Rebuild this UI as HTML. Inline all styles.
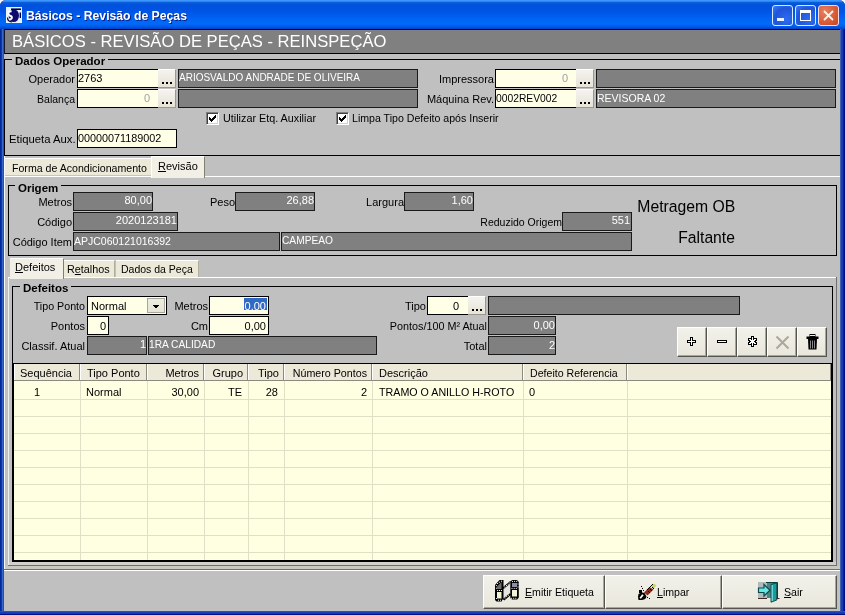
<!DOCTYPE html>
<html><head><meta charset="utf-8">
<style>
*{margin:0;padding:0;box-sizing:border-box}
html,body{width:845px;height:615px;overflow:hidden;background:#C0C0C0}
body{position:relative;will-change:transform;font-family:"Liberation Sans",sans-serif;font-size:11px;color:#000}
.a{position:absolute;white-space:nowrap}
.t{position:absolute;white-space:nowrap;line-height:12px}
.r{text-align:right}
.in{position:absolute;background:#FFFFE8;border:1px solid #000;white-space:nowrap;overflow:hidden;line-height:17px;padding:0 1px}
.ro{position:absolute;background:#808080;border:1px solid #1a1a1a;color:#fff;white-space:nowrap;overflow:hidden;line-height:16px;padding:0 0px}
.dots{position:absolute;width:18px;height:19px;background:linear-gradient(#F4F3EE,#E6E3D6);border-right:1px solid #9a988c;border-bottom:1px solid #9a988c;border-top:1px solid #fff;}
.dots i{position:absolute;left:4px;top:12px;width:2px;height:2px;background:#000;box-shadow:4px 0 #000,8px 0 #000}
.gb{position:absolute;border:1px solid #000;}
.gbl{position:absolute;font-weight:bold;font-size:11.5px;line-height:12px;background:#C0C0C0;padding:0 3px}
.cb{position:absolute;width:13px;height:13px;background:#fff;border-style:solid;border-width:1px;border-color:#808080 #fff #fff #808080;box-shadow:inset 1px 1px #404040, inset -1px -1px #D4D0C8}
.hdr{position:absolute;top:364px;height:17px;line-height:16px;background:#ECE9D8;border-right:1px solid #ACA899;box-shadow:inset -1px 0 #fff}
.btn{position:absolute;background:linear-gradient(#F2F1EA,#E9E7DB);border-top:1px solid #fff;border-left:1px solid #fff;border-right:1px solid #555550;border-bottom:1px solid #555550;box-shadow:inset -1px -1px #A8A698}
.hc{position:absolute;top:364px;height:17px;background:#ECE9D8;border-right:1px solid #8C8A7E;border-bottom:1px solid #8C8A7E;box-shadow:inset 1px 0 #fff}
.gl{background:#E0E0C6}
</style></head><body>
<!-- window frame -->
<div class="a" style="left:0;top:0;width:845px;height:615px;background:#F0F4FF"></div>
<div class="a" style="left:0;top:0;width:845px;height:615px;background:#0838B0;border-radius:6px 6px 0 0"></div>
<div class="a" style="left:0;top:0;width:845px;height:29px;border-radius:6px 6px 0 0;background:linear-gradient(to bottom,#3D95FF 0px,#3D95FF 1px,#0A5ED8 2.5px,#0050DC 5px,#0055E6 12px,#0064F4 19px,#006AF8 24px,#005AEA 26.5px,#0040C8 29px)"></div>
<div class="a" style="left:0;top:29px;width:4px;height:586px;background:linear-gradient(to right,#002A9A 0,#002A9A 1px,#083AA8 1px,#083AA8 2px,#3A64C8 2px,#3A64C8 3px,#2850B0 3px)"></div>
<div class="a" style="left:840px;top:29px;width:5px;height:586px;background:linear-gradient(to right,#4060B0 0,#4060B0 1px,#2040B8 1px,#1838B0 3px,#0820A0 3px,#0820A0 4px,#000E88 4px)"></div>
<div class="a" style="left:0;top:611px;width:845px;height:4px;background:linear-gradient(#3050B8 0,#3050B8 1px,#1840B8 1px,#1038B0 3px,#001088 3px)"></div>
<div class="a" style="left:4px;top:29px;width:836px;height:1px;background:#000050"></div>
<div class="a" style="left:4px;top:30px;width:836px;height:581px;background:#C0C0C0"></div>
<!-- icon -->
<svg class="a" style="left:6px;top:7px" width="16" height="16" viewBox="0 0 16 16">
<rect x="0" y="0" width="16" height="16" fill="#E6F2FF"/>
<ellipse cx="7.8" cy="8.6" rx="5.2" ry="6.4" fill="#0A0A70"/>
<path d="M5 2.2 L15 2.2" stroke="#000040" stroke-width="1.6"/>
<path d="M14.3 5.5 L14.3 11" stroke="#000040" stroke-width="1.4"/>
<path d="M5.6 4.2 Q2.2 4.2 2.4 6.6 Q2.6 8.4 4.6 9 Q6.4 9.6 5.6 11.6 Q4.8 13 2.2 12.4" stroke="#fff" stroke-width="2" fill="none"/>
<path d="M1.5 10.5 Q1.5 14.5 6 15" stroke="#000030" stroke-width="1.2" fill="none"/>
</svg>
<!-- title -->
<div class="a" style="left:26px;top:8px;font-weight:bold;font-size:13.5px;line-height:16px;color:#fff;text-shadow:1px 1px #0A1E8C;transform:scaleX(0.905);transform-origin:0 0">Básicos - Revisão de Peças</div>
<!-- title buttons -->
<div class="a" style="left:772px;top:5px;width:21px;height:21px;border:1px solid #D8ECFF;border-radius:3px;background:radial-gradient(circle at 70% 70%,#2E6BF0,#1F55D8 60%,#3A7BFF)"><div class="a" style="left:4px;top:12px;width:7px;height:3px;background:#E8F4FF"></div></div>
<div class="a" style="left:795px;top:5px;width:21px;height:21px;border:1px solid #D8ECFF;border-radius:3px;background:radial-gradient(circle at 70% 70%,#2E6BF0,#1F55D8 60%,#3A7BFF)"><div class="a" style="left:4px;top:4px;width:11px;height:11px;border:1px solid #fff;border-top-width:3px"></div></div>
<div class="a" style="left:818px;top:5px;width:21px;height:21px;border:1px solid #F4DCE8;border-radius:3px;background:radial-gradient(circle at 30% 30%,#E88060,#D85A34 60%,#C04820)">
<svg class="a" style="left:0;top:0" width="19" height="19"><path d="M5 5 L14 14 M14 5 L5 14" stroke="#FFF0E6" stroke-width="1.8"/></svg></div>

<!-- header -->
<div class="a" style="left:5px;top:30px;width:835px;height:23px;background:#808080"></div>
<div class="a" style="left:4px;top:53px;width:836px;height:1px;background:#000"></div>
<div class="a" style="left:4px;top:29px;width:1px;height:25px;background:#101830"></div>

<div class="a" style="left:12px;top:32px;font-size:16.6px;line-height:20px;color:#fff">BÁSICOS - REVISÃO DE PEÇAS - REINSPEÇÃO</div>

<!-- Dados Operador -->
<div class="gb" style="left:4px;top:59px;width:836px;height:97px;border-width:1px 0 1px 1px"></div>
<div class="gbl" style="left:12px;top:55px">Dados Operador</div>

<div class="t r" style="left:0;width:75px;top:73px">Operador</div>
<div class="in" style="left:77px;top:69px;width:82px;height:19px;padding-left:0">2763</div>
<div class="dots" style="left:158px;top:69px"><i></i></div>
<div class="ro" style="left:178px;top:69px;width:240px;height:19px;font-size:10px">ARIOSVALDO ANDRADE DE OLIVEIRA</div>

<div class="t r" style="left:0;width:75px;top:93px;font-size:10.5px">Balança</div>
<div class="in r" style="left:77px;top:89px;width:82px;height:19px;color:#A0A0A0;padding-right:8px">0</div>
<div class="dots" style="left:158px;top:89px"><i></i></div>
<div class="ro" style="left:178px;top:89px;width:240px;height:19px"></div>

<div class="t r" style="left:400px;width:94px;top:73px">Impressora</div>
<div class="in r" style="left:495px;top:69px;width:82px;height:19px;color:#A0A0A0;padding-right:8px">0</div>
<div class="dots" style="left:576px;top:69px"><i></i></div>
<div class="ro" style="left:596px;top:69px;width:240px;height:19px"></div>

<div class="t r" style="left:400px;width:94px;top:93px">Máquina Rev.</div>
<div class="in" style="left:495px;top:89px;width:82px;height:19px;font-size:10.3px;padding-left:0">0002REV002</div>
<div class="dots" style="left:576px;top:89px"><i></i></div>
<div class="ro" style="left:596px;top:89px;width:240px;height:19px;font-size:10.5px">REVISORA 02</div>

<div class="cb" style="left:206px;top:112px"><svg class="a" style="left:2px;top:2px" width="7" height="7" shape-rendering="crispEdges"><rect x="6" y="0" width="1" height="1"/><rect x="5" y="1" width="1" height="1"/><rect x="6" y="1" width="1" height="1"/><rect x="0" y="2" width="1" height="1"/><rect x="4" y="2" width="1" height="1"/><rect x="5" y="2" width="1" height="1"/><rect x="6" y="2" width="1" height="1"/><rect x="0" y="3" width="1" height="1"/><rect x="1" y="3" width="1" height="1"/><rect x="3" y="3" width="1" height="1"/><rect x="4" y="3" width="1" height="1"/><rect x="5" y="3" width="1" height="1"/><rect x="0" y="4" width="1" height="1"/><rect x="1" y="4" width="1" height="1"/><rect x="2" y="4" width="1" height="1"/><rect x="3" y="4" width="1" height="1"/><rect x="4" y="4" width="1" height="1"/><rect x="1" y="5" width="1" height="1"/><rect x="2" y="5" width="1" height="1"/><rect x="3" y="5" width="1" height="1"/><rect x="2" y="6" width="1" height="1"/></svg></div>
<div class="t" style="left:223px;top:112px;font-size:10.8px">Utilizar Etq. Auxiliar</div>
<div class="cb" style="left:336px;top:112px"><svg class="a" style="left:2px;top:2px" width="7" height="7" shape-rendering="crispEdges"><rect x="6" y="0" width="1" height="1"/><rect x="5" y="1" width="1" height="1"/><rect x="6" y="1" width="1" height="1"/><rect x="0" y="2" width="1" height="1"/><rect x="4" y="2" width="1" height="1"/><rect x="5" y="2" width="1" height="1"/><rect x="6" y="2" width="1" height="1"/><rect x="0" y="3" width="1" height="1"/><rect x="1" y="3" width="1" height="1"/><rect x="3" y="3" width="1" height="1"/><rect x="4" y="3" width="1" height="1"/><rect x="5" y="3" width="1" height="1"/><rect x="0" y="4" width="1" height="1"/><rect x="1" y="4" width="1" height="1"/><rect x="2" y="4" width="1" height="1"/><rect x="3" y="4" width="1" height="1"/><rect x="4" y="4" width="1" height="1"/><rect x="1" y="5" width="1" height="1"/><rect x="2" y="5" width="1" height="1"/><rect x="3" y="5" width="1" height="1"/><rect x="2" y="6" width="1" height="1"/></svg></div>
<div class="t" style="left:352px;top:112px;font-size:10.6px">Limpa Tipo Defeito após Inserir</div>

<div class="t" style="left:9px;top:133px;font-size:11.3px">Etiqueta Aux.</div>
<div class="in" style="left:77px;top:129px;width:100px;height:19px;font-size:10.8px;padding-left:0">00000071189002</div>

<!-- main tabs -->
<div class="a" style="left:4px;top:156px;width:1px;height:415px;background:#F4FAFF"></div>
<div class="a" style="left:5px;top:176px;width:835px;height:1px;background:#fff"></div>
<div class="a" style="left:4px;top:569px;width:836px;height:1px;background:#707068"></div>
<div class="a" style="left:4px;top:570px;width:836px;height:1px;background:#fff"></div>
<div class="a" style="left:5px;top:158px;width:146px;height:18px;background:#ECE9D8;border-top:1px solid #fff;border-bottom:1px solid #C8C6B8"></div>
<div class="t" style="left:12px;top:162px;font-size:10.6px">Forma de Acondicionamento</div>
<div class="a" style="left:151px;top:156px;width:54px;height:22px;background:#F1EFE6;border-top:1px solid #fff;border-left:1px solid #fff;border-right:1px solid #808070"></div>
<div class="t" style="left:158px;top:160px"><u>R</u>evisão</div>

<!-- tab page -->
<div class="a" style="left:8px;top:277px;width:1px;height:289px;background:#F0F0F0"></div>
<div class="a" style="left:9px;top:562px;width:827px;height:3px;background:#D0D0CC"></div>
<div class="a" style="left:5px;top:566px;width:835px;height:3px;background:#C9C9C2"></div>
<div class="a" style="left:8px;top:565px;width:829px;height:1px;background:#707068"></div>
<div class="a" style="left:836px;top:277px;width:1px;height:289px;background:#707070"></div>
<div class="gb" style="left:8px;top:185px;width:829px;height:71px"></div>
<div class="gbl" style="left:15px;top:182px">Origem</div>

<div class="t r" style="left:0;width:72px;top:196px">Metros</div>
<div class="ro r" style="left:73px;top:192px;width:80px;height:19px;padding-right:0;line-height:15px">80,00</div>
<div class="t r" style="left:150px;width:85px;top:196px">Peso</div>
<div class="ro r" style="left:235px;top:192px;width:80px;height:19px;padding-right:0;line-height:15px">26,88</div>
<div class="t r" style="left:320px;width:84px;top:196px">Largura</div>
<div class="ro r" style="left:404px;top:192px;width:70px;height:19px;padding-right:0;line-height:15px">1,60</div>
<div class="a" style="right:110px;top:196px;font-size:17.4px;line-height:20px;transform:scaleX(0.905);transform-origin:100% 0">Metragem OB</div>

<div class="t r" style="left:0;width:72px;top:216px">Código</div>
<div class="ro r" style="left:73px;top:212px;width:105px;height:19px;padding-right:0;line-height:15px">2020123181</div>
<div class="t r" style="left:400px;width:162px;top:216px;font-size:10.5px">Reduzido Origem</div>
<div class="ro r" style="left:562px;top:212px;width:70px;height:19px;padding-right:1px;line-height:15px">551</div>

<div class="t r" style="left:0;width:72px;top:236px">Código Item</div>
<div class="ro" style="left:73px;top:232px;width:207px;height:19px;font-size:10.5px">APJC060121016392</div>
<div class="ro" style="left:281px;top:232px;width:351px;height:19px;font-size:10.2px">CAMPEAO</div>
<div class="a" style="right:110px;top:227px;font-size:17.4px;line-height:20px;transform:scaleX(0.9);transform-origin:100% 0">Faltante</div>

<!-- sub tabs -->
<div class="a" style="left:8px;top:277px;width:828px;height:1px;background:#fff"></div>
<div class="a" style="left:64px;top:260px;width:51px;height:17px;background:#ECE9D8;border-top:1px solid #fff;border-right:1px solid #B0AE9F"></div>
<div class="t" style="left:67px;top:263px;font-size:10.8px"><span>R<u>e</u>talhos</span></div>
<div class="a" style="left:116px;top:260px;width:83px;height:17px;background:#ECE9D8;border-top:1px solid #fff;border-right:1px solid #B0AE9F"></div>
<div class="t" style="left:121px;top:263px;font-size:10.5px">Dados da Peça</div>
<div class="a" style="left:10px;top:258px;width:54px;height:21px;background:#F1EFE6;border-top:1px solid #fff;border-right:1px solid #808070"></div>
<div class="t" style="left:15px;top:261px"><u>D</u>efeitos</div>

<!-- Defeitos group -->
<div class="gb" style="left:12px;top:286px;width:821px;height:78px"></div>
<div class="gbl" style="left:20px;top:282px">Defeitos</div>

<div class="t r" style="left:0;width:85px;top:300px;font-size:10.7px">Tipo Ponto</div>
<div class="in" style="left:87px;top:296px;width:80px;height:19px;padding-left:3px;line-height:18px">Normal</div>
<div class="a" style="left:147px;top:298px;width:18px;height:15px;background:linear-gradient(#EEEDE2,#E6E4D6);border:1px solid #A8A698"><svg class="a" style="left:5px;top:6px" width="6" height="4" shape-rendering="crispEdges"><path d="M0 0h6v1h-1v1h-1v1h-2v-1h-1v-1h-1z" fill="#000"/></svg></div>
<div class="t r" style="left:150px;width:58px;top:300px">Metros</div>
<div class="in" style="left:209px;top:296px;width:60px;height:19px"><span class="a" style="left:34px;top:1px;width:23px;height:12px;background:#316AC5"></span><span class="a" style="right:2px;top:0;color:#fff;line-height:18px">0,00</span></div>
<div class="t r" style="left:380px;width:46px;top:300px">Tipo</div>
<div class="in r" style="left:427px;top:296px;width:42px;height:19px;padding-right:9px;line-height:18px">0</div>
<div class="dots" style="left:468px;top:296px"><i></i></div>
<div class="ro" style="left:488px;top:296px;width:252px;height:19px"></div>

<div class="t r" style="left:0;width:85px;top:320px">Pontos</div>
<div class="in r" style="left:87px;top:316px;width:22px;height:19px;padding-right:2px;line-height:18px">0</div>
<div class="t r" style="left:150px;width:58px;top:320px">Cm</div>
<div class="in r" style="left:209px;top:316px;width:60px;height:19px;padding-right:2px;line-height:18px">0,00</div>
<div class="t r" style="left:330px;width:157px;top:320px;font-size:10.8px">Pontos/100 M² Atual</div>
<div class="ro r" style="left:488px;top:316px;width:68px;height:19px;padding-right:0">0,00</div>

<div class="t r" style="left:0;width:85px;top:340px">Classif. Atual</div>
<div class="ro r" style="left:87px;top:336px;width:60px;height:19px;padding-right:0;line-height:15px">1</div>
<div class="ro" style="left:148px;top:336px;width:229px;height:19px;font-size:10.2px;line-height:15px">1RA CALIDAD</div>
<div class="t r" style="left:400px;width:87px;top:340px">Total</div>
<div class="ro r" style="left:488px;top:336px;width:68px;height:19px;padding-right:0">2</div>

<!-- action buttons -->
<div class="btn" style="left:677px;top:327px;width:30px;height:30px"></div>
<div class="btn" style="left:707px;top:327px;width:30px;height:30px"></div>
<div class="btn" style="left:737px;top:327px;width:30px;height:30px"></div>
<div class="btn" style="left:767px;top:327px;width:30px;height:30px"></div>
<div class="btn" style="left:797px;top:327px;width:30px;height:30px"></div>

<!-- grid -->
<div class="a" style="left:12px;top:363px;width:821px;height:199px;border:2px solid #000;border-top-width:1px;background:#FFFFE2"></div>

<!-- grid header -->
<div class="hc" style="left:14px;width:66px"></div>
<div class="hc" style="left:80px;width:67px"></div>
<div class="hc" style="left:147px;width:57px"></div>
<div class="hc" style="left:204px;width:44px"></div>
<div class="hc" style="left:248px;width:36px"></div>
<div class="hc" style="left:284px;width:88px"></div>
<div class="hc" style="left:372px;width:151px"></div>
<div class="hc" style="left:523px;width:104px"></div>
<div class="hc" style="left:627px;width:204px"></div>
<div class="a gl" style="left:14px;top:399px;width:817px;height:1px"></div>
<div class="a gl" style="left:14px;top:416px;width:817px;height:1px"></div>
<div class="a gl" style="left:14px;top:433px;width:817px;height:1px"></div>
<div class="a gl" style="left:14px;top:450px;width:817px;height:1px"></div>
<div class="a gl" style="left:14px;top:467px;width:817px;height:1px"></div>
<div class="a gl" style="left:14px;top:484px;width:817px;height:1px"></div>
<div class="a gl" style="left:14px;top:501px;width:817px;height:1px"></div>
<div class="a gl" style="left:14px;top:518px;width:817px;height:1px"></div>
<div class="a gl" style="left:14px;top:535px;width:817px;height:1px"></div>
<div class="a gl" style="left:14px;top:552px;width:817px;height:1px"></div>
<div class="a gl" style="left:80px;top:381px;width:1px;height:179px"></div>
<div class="a gl" style="left:147px;top:381px;width:1px;height:179px"></div>
<div class="a gl" style="left:204px;top:381px;width:1px;height:179px"></div>
<div class="a gl" style="left:248px;top:381px;width:1px;height:179px"></div>
<div class="a gl" style="left:284px;top:381px;width:1px;height:179px"></div>
<div class="a gl" style="left:372px;top:381px;width:1px;height:179px"></div>
<div class="a gl" style="left:523px;top:381px;width:1px;height:179px"></div>
<div class="a gl" style="left:627px;top:381px;width:1px;height:179px"></div>
<!-- grid text -->
<div class="t" style="left:20px;top:367px">Sequência</div>
<div class="t" style="left:87px;top:367px">Tipo Ponto</div>
<div class="t r" style="right:646px;top:367px">Metros</div>
<div class="t r" style="right:602px;top:367px">Grupo</div>
<div class="t r" style="right:566px;top:367px">Tipo</div>
<div class="t r" style="right:478px;top:367px;font-size:10.7px">Número Pontos</div>
<div class="t" style="left:379px;top:367px">Descrição</div>
<div class="t" style="left:530px;top:367px;font-size:10.6px">Defeito Referencia</div>
<div class="t" style="left:34px;top:386px">1</div>
<div class="t" style="left:86px;top:386px">Normal</div>
<div class="t r" style="right:646px;top:386px">30,00</div>
<div class="t r" style="right:603px;top:386px">TE</div>
<div class="t r" style="right:567px;top:386px">28</div>
<div class="t r" style="right:478px;top:386px">2</div>
<div class="t" style="left:379px;top:386px;font-size:10.7px">TRAMO O ANILLO H-ROTO</div>
<div class="t" style="left:529px;top:386px">0</div>
<!-- bottom panel -->
<div class="btn" style="left:483px;top:575px;width:122px;height:34px"></div>
<div class="t" style="left:525px;top:586px;font-size:10.6px"><u>E</u>mitir Etiqueta</div>
<div class="btn" style="left:605px;top:575px;width:117px;height:34px"></div>
<div class="t" style="left:657px;top:586px;font-size:10.6px"><u>L</u>impar</div>
<div class="btn" style="left:722px;top:575px;width:115px;height:34px"></div>
<div class="t" style="left:784px;top:586px;font-size:10.6px"><u>S</u>air</div>
<!-- action icons -->
<svg class="a" style="left:687px;top:337px" width="9" height="9" shape-rendering="crispEdges"><g fill="#000"><rect x="3" y="0" width="1" height="1"/><rect x="4" y="0" width="1" height="1"/><rect x="5" y="0" width="1" height="1"/><rect x="3" y="1" width="1" height="1"/><rect x="5" y="1" width="1" height="1"/><rect x="3" y="2" width="1" height="1"/><rect x="5" y="2" width="1" height="1"/><rect x="0" y="3" width="1" height="1"/><rect x="1" y="3" width="1" height="1"/><rect x="2" y="3" width="1" height="1"/><rect x="3" y="3" width="1" height="1"/><rect x="5" y="3" width="1" height="1"/><rect x="6" y="3" width="1" height="1"/><rect x="7" y="3" width="1" height="1"/><rect x="8" y="3" width="1" height="1"/><rect x="0" y="4" width="1" height="1"/><rect x="8" y="4" width="1" height="1"/><rect x="0" y="5" width="1" height="1"/><rect x="1" y="5" width="1" height="1"/><rect x="2" y="5" width="1" height="1"/><rect x="3" y="5" width="1" height="1"/><rect x="5" y="5" width="1" height="1"/><rect x="6" y="5" width="1" height="1"/><rect x="7" y="5" width="1" height="1"/><rect x="8" y="5" width="1" height="1"/><rect x="3" y="6" width="1" height="1"/><rect x="5" y="6" width="1" height="1"/><rect x="3" y="7" width="1" height="1"/><rect x="5" y="7" width="1" height="1"/><rect x="3" y="8" width="1" height="1"/><rect x="4" y="8" width="1" height="1"/><rect x="5" y="8" width="1" height="1"/></g><g fill="#fff"><rect x="4" y="1" width="1" height="1"/><rect x="4" y="2" width="1" height="1"/><rect x="4" y="3" width="1" height="1"/><rect x="1" y="4" width="1" height="1"/><rect x="2" y="4" width="1" height="1"/><rect x="3" y="4" width="1" height="1"/><rect x="4" y="4" width="1" height="1"/><rect x="5" y="4" width="1" height="1"/><rect x="6" y="4" width="1" height="1"/><rect x="7" y="4" width="1" height="1"/><rect x="4" y="5" width="1" height="1"/><rect x="4" y="6" width="1" height="1"/><rect x="4" y="7" width="1" height="1"/></g></svg>
<svg class="a" style="left:717px;top:340px" width="10" height="3" shape-rendering="crispEdges"><g fill="#000"><rect x="0" y="0" width="1" height="1"/><rect x="1" y="0" width="1" height="1"/><rect x="2" y="0" width="1" height="1"/><rect x="3" y="0" width="1" height="1"/><rect x="4" y="0" width="1" height="1"/><rect x="5" y="0" width="1" height="1"/><rect x="6" y="0" width="1" height="1"/><rect x="7" y="0" width="1" height="1"/><rect x="8" y="0" width="1" height="1"/><rect x="9" y="0" width="1" height="1"/><rect x="0" y="1" width="1" height="1"/><rect x="9" y="1" width="1" height="1"/><rect x="0" y="2" width="1" height="1"/><rect x="1" y="2" width="1" height="1"/><rect x="2" y="2" width="1" height="1"/><rect x="3" y="2" width="1" height="1"/><rect x="4" y="2" width="1" height="1"/><rect x="5" y="2" width="1" height="1"/><rect x="6" y="2" width="1" height="1"/><rect x="7" y="2" width="1" height="1"/><rect x="8" y="2" width="1" height="1"/><rect x="9" y="2" width="1" height="1"/></g><g fill="#fff"><rect x="1" y="1" width="1" height="1"/><rect x="2" y="1" width="1" height="1"/><rect x="3" y="1" width="1" height="1"/><rect x="4" y="1" width="1" height="1"/><rect x="5" y="1" width="1" height="1"/><rect x="6" y="1" width="1" height="1"/><rect x="7" y="1" width="1" height="1"/><rect x="8" y="1" width="1" height="1"/></g></svg>
<svg class="a" style="left:748px;top:336px" width="9" height="11" shape-rendering="crispEdges"><g fill="#000"><rect x="3" y="0" width="1" height="1"/><rect x="4" y="0" width="1" height="1"/><rect x="5" y="0" width="1" height="1"/><rect x="3" y="1" width="1" height="1"/><rect x="5" y="1" width="1" height="1"/><rect x="0" y="2" width="1" height="1"/><rect x="1" y="2" width="1" height="1"/><rect x="2" y="2" width="1" height="1"/><rect x="3" y="2" width="1" height="1"/><rect x="5" y="2" width="1" height="1"/><rect x="6" y="2" width="1" height="1"/><rect x="7" y="2" width="1" height="1"/><rect x="8" y="2" width="1" height="1"/><rect x="0" y="3" width="1" height="1"/><rect x="3" y="3" width="1" height="1"/><rect x="5" y="3" width="1" height="1"/><rect x="8" y="3" width="1" height="1"/><rect x="0" y="4" width="1" height="1"/><rect x="1" y="4" width="1" height="1"/><rect x="7" y="4" width="1" height="1"/><rect x="8" y="4" width="1" height="1"/><rect x="1" y="5" width="1" height="1"/><rect x="2" y="5" width="1" height="1"/><rect x="6" y="5" width="1" height="1"/><rect x="7" y="5" width="1" height="1"/><rect x="0" y="6" width="1" height="1"/><rect x="1" y="6" width="1" height="1"/><rect x="7" y="6" width="1" height="1"/><rect x="8" y="6" width="1" height="1"/><rect x="0" y="7" width="1" height="1"/><rect x="3" y="7" width="1" height="1"/><rect x="5" y="7" width="1" height="1"/><rect x="8" y="7" width="1" height="1"/><rect x="0" y="8" width="1" height="1"/><rect x="1" y="8" width="1" height="1"/><rect x="2" y="8" width="1" height="1"/><rect x="3" y="8" width="1" height="1"/><rect x="5" y="8" width="1" height="1"/><rect x="6" y="8" width="1" height="1"/><rect x="7" y="8" width="1" height="1"/><rect x="8" y="8" width="1" height="1"/><rect x="3" y="9" width="1" height="1"/><rect x="5" y="9" width="1" height="1"/><rect x="3" y="10" width="1" height="1"/><rect x="4" y="10" width="1" height="1"/><rect x="5" y="10" width="1" height="1"/></g><g fill="#fff"><rect x="4" y="1" width="1" height="1"/><rect x="4" y="2" width="1" height="1"/><rect x="1" y="3" width="1" height="1"/><rect x="2" y="3" width="1" height="1"/><rect x="4" y="3" width="1" height="1"/><rect x="6" y="3" width="1" height="1"/><rect x="7" y="3" width="1" height="1"/><rect x="2" y="4" width="1" height="1"/><rect x="3" y="4" width="1" height="1"/><rect x="4" y="4" width="1" height="1"/><rect x="5" y="4" width="1" height="1"/><rect x="6" y="4" width="1" height="1"/><rect x="3" y="5" width="1" height="1"/><rect x="4" y="5" width="1" height="1"/><rect x="5" y="5" width="1" height="1"/><rect x="2" y="6" width="1" height="1"/><rect x="3" y="6" width="1" height="1"/><rect x="4" y="6" width="1" height="1"/><rect x="5" y="6" width="1" height="1"/><rect x="6" y="6" width="1" height="1"/><rect x="1" y="7" width="1" height="1"/><rect x="2" y="7" width="1" height="1"/><rect x="4" y="7" width="1" height="1"/><rect x="6" y="7" width="1" height="1"/><rect x="7" y="7" width="1" height="1"/><rect x="4" y="8" width="1" height="1"/><rect x="4" y="9" width="1" height="1"/></g></svg>
<svg class="a" style="left:775px;top:335px" width="15" height="15"><path d="M1.5 1.5L13.5 13.5M13.5 1.5L1.5 13.5" stroke="#A9A89E" stroke-width="2"/></svg>
<svg class="a" style="left:806px;top:334px" width="13" height="16"><rect x="4" y="0.5" width="5" height="2" fill="none" stroke="#000" stroke-width="1"/><rect x="0.5" y="2.5" width="12" height="2.5" fill="#000"/><path d="M2 5h9l-0.5 10.5h-8z" fill="#000"/><path d="M4.5 6.5v8M6.5 6.5v8M8.5 6.5v8" stroke="#aaa" stroke-width="0.8"/></svg>
<!-- bottom icons -->
<svg class="a" style="left:493px;top:578px" width="28" height="26" viewBox="0 0 28 26">
<path d="M10 10.2 L17.8 3.8 L17.5 16 L10.6 21.6 Z" fill="#E4E4E0"/>
<path d="M10 10.2 L17.8 3.8 M10.6 21.6 L17.5 16" stroke="#000" stroke-width="2"/>
<path d="M2 7 L6.5 2 L10.5 2 L10.5 21.5 L8.5 23.5 L3.5 23.5 L2 22 Z" fill="#000"/>
<path d="M4 8.5 L8.5 4 L8.5 11 L4 11 Z" fill="#6E6E6E"/>
<rect x="4" y="14" width="4.5" height="6.5" fill="#F2F2D6"/>
<path d="M17.3 4 L19 2 L24 2 L25.8 4 L25.8 19.5 L24.2 21.5 L19 21.5 L17.3 20 Z" fill="#000"/>
<rect x="19" y="5" width="5" height="4" fill="#8E8EA6"/>
<rect x="19" y="12" width="5" height="6.5" fill="#F2F2D6"/>
<g fill="#fff"><rect x="4.1" y="5.0" width="1" height="1"/><rect x="5.9" y="3.7" width="1" height="1"/><rect x="8.0" y="2.7" width="1" height="1"/><rect x="2.9" y="7.1" width="1" height="1"/><rect x="2.9" y="9.7" width="1" height="1"/><rect x="4.1" y="12.0" width="1" height="1"/><rect x="6.1" y="12.0" width="1" height="1"/><rect x="8.0" y="12.0" width="1" height="1"/><rect x="5.0" y="21.7" width="1" height="1"/><rect x="7.0" y="21.7" width="1" height="1"/><rect x="9.0" y="21.7" width="1" height="1"/><rect x="2.9" y="20.0" width="1" height="1"/><rect x="19.0" y="2.9" width="1" height="1"/><rect x="21.1" y="2.9" width="1" height="1"/><rect x="23.2" y="2.9" width="1" height="1"/><rect x="18.5" y="9.9" width="1" height="1"/><rect x="20.7" y="9.9" width="1" height="1"/><rect x="22.8" y="9.9" width="1" height="1"/><rect x="18.1" y="19.8" width="1" height="1"/><rect x="20.2" y="19.8" width="1" height="1"/><rect x="22.3" y="19.8" width="1" height="1"/><rect x="24.5" y="5.5" width="1" height="1"/><rect x="24.5" y="8.5" width="1" height="1"/><rect x="11.3" y="8.5" width="1" height="1"/><rect x="13.0" y="7.1" width="1" height="1"/><rect x="14.7" y="5.7" width="1" height="1"/><rect x="16.3" y="4.4" width="1" height="1"/><rect x="11.5" y="19.5" width="1" height="1"/><rect x="13.2" y="18.1" width="1" height="1"/><rect x="14.9" y="16.7" width="1" height="1"/></g>
</svg>
<svg class="a" style="left:636px;top:582px" width="22" height="20" viewBox="0 0 22 20">
<path d="M15.5 4 L18 1.5 L20.5 3.5 L17.5 7 Z" fill="#C4DA66"/>
<path d="M8 10.5 L13.5 5 L17.5 7.5 L11.5 13.5 Z" fill="#8A2A1E"/>
<path d="M2.5 12 Q5.5 9.5 8.5 11 L10.5 14.5 Q10 17.5 6 18 L2.5 18 Q1.5 15 2.5 12 Z" fill="#000"/>
<rect x="3" y="8" width="3" height="3" fill="#000"/>
<path d="M4.2 16.2 L7 12.8" stroke="#fff" stroke-width="1.8"/>
<g fill="#000" shape-rendering="crispEdges"><rect x="5" y="4" width="1" height="1"/><rect x="6" y="6" width="1" height="1"/><rect x="7" y="8" width="1" height="1"/><rect x="11" y="15" width="1" height="1"/><rect x="13" y="16" width="1" height="1"/><rect x="11" y="7" width="1" height="1"/><rect x="12" y="6" width="1" height="1"/><rect x="13" y="5" width="1" height="1"/><rect x="14" y="4" width="1" height="1"/><rect x="15" y="3" width="1" height="1"/><rect x="16" y="2" width="1" height="1"/><rect x="12" y="9" width="1" height="1"/><rect x="14" y="7" width="1" height="1"/><rect x="16" y="5" width="1" height="1"/><rect x="13" y="10" width="1" height="1"/><rect x="15" y="8" width="1" height="1"/><rect x="17" y="6" width="1" height="1"/></g>
</svg>
<svg class="a" style="left:756px;top:579px" width="25" height="25" viewBox="0 0 25 25">
<rect x="2" y="3" width="9.5" height="16" fill="#B0BABA"/>
<rect x="11" y="3.5" width="10" height="15.5" fill="#4E8484"/>
<path d="M10 3.5 L21.5 3.5 L21.5 19.5" stroke="#0A3C3C" stroke-width="1" fill="none"/>
<path d="M15 5.5 L20.8 3.8 L20.8 21 L15 23.2 Z" fill="#1A9C9C" stroke="#0A4646" stroke-width="0.9"/>
<path d="M16.2 6 L16.2 22" stroke="#90F0F0" stroke-width="1"/>
<path d="M2.5 9 L8 9 L8 5.5 L14 11.2 L8 17 L8 13.5 L2.5 13.5 Z" fill="#6AE6E6" stroke="#0A4A4A" stroke-width="1.2"/>
<path d="M2 19.5 L11 19.5 M20.5 19.5 L23.5 19.5" stroke="#402828" stroke-width="1"/>
</svg>
</body></html>
